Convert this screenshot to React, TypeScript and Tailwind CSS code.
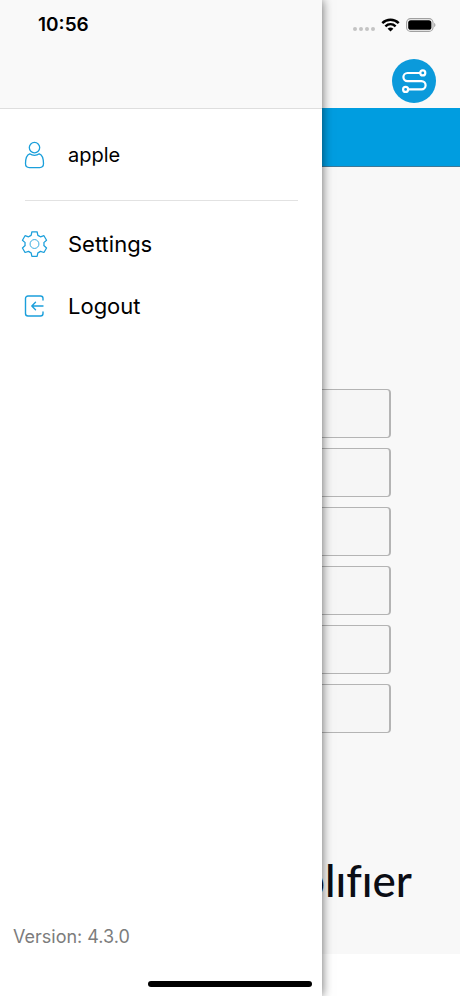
type IconProps = { className?: string };

function WifiIcon({ className }: IconProps) {
  return (
    <svg viewBox="0 0 20 15" className={className} fill="none" stroke="#000" strokeWidth="2.6" aria-hidden="true">
      <path d="M1.2 5.6C6.2.7 13.8.7 18.8 5.6" />
      <path d="M4.5 8.9c3.2-3 7.8-3 11 0" />
      <path d="M10 14.4 6.9 11.4c1.8-1.6 4.4-1.6 6.2 0z" fill="#000" stroke="none" />
    </svg>
  );
}

function BatteryIcon({ className }: IconProps) {
  return (
    <svg viewBox="0 0 30 14" className={className} fill="none" aria-hidden="true">
      <rect x="0.6" y="0.6" width="26.400" height="12.8" rx="4" stroke="#a0a0a0" strokeWidth="1.1" />
      <rect x="2.2" y="2.2" width="23.200" height="9.6" rx="2.6" fill="#000" />
      <path d="M28.200 4.8c1.7.7 1.7 3.7 0 4.4z" fill="#a0a0a0" />
    </svg>
  );
}

function BrandBadge({ className }: IconProps) {
  return (
    <svg viewBox="0 0 44 44" className={className} fill="none" aria-hidden="true">
      <circle cx="22" cy="22" r="22" fill="#0b9adb" />
      <g stroke="#fff" strokeWidth="2.2">
        <path d="M28 14H15.500a4 4 0 0 0 0 8.200H29.500a4.100 4.100 0 0 1 0 8.200H16.500" />
        <circle cx="30.8" cy="13.900" r="2.500" />
        <circle cx="13.600" cy="30.4" r="2.500" />
      </g>
    </svg>
  );
}

function UserIcon({ className }: IconProps) {
  return (
    <svg viewBox="0 0 26 28" className={className} fill="none" stroke="#1b9fdb" strokeWidth="1.3" aria-hidden="true">
      <circle cx="13" cy="6.600" r="5.2" />
      <path
        d="M8.2 12.8C5.4 13.8 4 18.4 4 22.6c0 3 1.4 4 3.8 4h10.4c2.4 0 3.8-1 3.8-4 0-4.200-1.400-8.800-4.200-9.800-1.300 1-2.900 1.600-4.800 1.600s-3.500-.6-4.800-1.600z"
        strokeLinejoin="round"
      />
    </svg>
  );
}

function GearIcon({ className }: IconProps) {
  return (
    <svg viewBox="0 0 28 28" className={className} fill="none" stroke="#1b9fdb" strokeWidth="1.3" aria-hidden="true">
      <circle cx="14" cy="14" r="4.600" strokeWidth="0.900" />
      <path
        d="M11.300 1.300h5.400l.8 3.700c1 .4 1.900.9 2.700 1.600l3.600-1.200 2.700 4.700-2.800 2.500c.2 1 .2 2 0 3l2.800 2.500-2.700 4.700-3.600-1.200c-.8.7-1.700 1.200-2.700 1.600l-.8 3.700h-5.400l-.8-3.700c-1-.4-1.900-.9-2.700-1.600l-3.600 1.200-2.700-4.700 2.800-2.500c-.2-1-.2-2 0-3L1.500 10.100l2.700-4.700 3.600 1.200c.8-.7 1.700-1.200 2.700-1.600z"
        strokeLinejoin="round"
      />
    </svg>
  );
}

function LogoutIcon({ className }: IconProps) {
  return (
    <svg
      viewBox="0 0 26 26"
      className={className}
      fill="none"
      stroke="#1b9fdb"
      strokeWidth="1.4"
      strokeLinecap="round"
      strokeLinejoin="round"
      aria-hidden="true"
    >
      <path d="M21.500 7V5.500a2.500 2.500 0 0 0-2.500-2.500H6.500A2.500 2.500 0 0 0 4 5.500v15A2.500 2.500 0 0 0 6.500 23H19a2.500 2.500 0 0 0 2.500-2.500V19" />
      <path d="M21.500 13H10.500M14 9.300 10.300 13l3.700 3.700" />
    </svg>
  );
}

const tiles = [1, 2, 3, 4, 5, 6];

function HomePage() {
  return (
    <div className="flex min-h-screen flex-col bg-white">
      <header className="flex h-[108px] flex-col items-end justify-between bg-[#f9f9f9] pt-[18px] pr-6 pb-[5px]">
        <div className="flex items-center gap-[6px]">
          <div className="flex gap-[2px] pt-2">
            {[0, 1, 2, 3].map((dot) => (
              <span key={dot} className="size-1 rounded-full bg-[#c4c4c4]" />
            ))}
          </div>
          <WifiIcon className="h-[14px] w-[19px]" />
          <BatteryIcon className="h-[14px] w-[30px]" />
        </div>
        <BrandBadge className="size-11" />
      </header>
      <div className="h-[59px] border-b border-[#3f7897] bg-[#009de0]" />
      <main className="flex flex-1 flex-col bg-[#f8f8f8] pt-[222px]">
        <div className="mx-auto flex w-[70%] flex-col gap-[10px]">
          {tiles.map((tile) => (
            <button
              key={tile}
              type="button"
              aria-label={`Tile ${tile}`}
              className="h-[49px] rounded border border-r-2 border-[#b4b4b4] bg-[#f6f6f6]"
            />
          ))}
        </div>
        <div className="mt-auto flex justify-end pr-12 pb-11 font-[Lato,sans-serif] text-[44px] leading-[60px] font-medium text-[#0b0d14] [font-variant-ligatures:none]">
          simplıfıer
        </div>
      </main>
      <div className="h-[42px]" />
    </div>
  );
}

function SideMenu() {
  return (
    <aside className="absolute inset-y-0 left-0 flex w-[70%] flex-col bg-white shadow-[0_0_10px_rgba(0,0,0,0.6)]">
      <div className="h-[109px] border-b border-[#dedede] bg-[#f9f9f9] pt-[13px] pl-[38px] text-[19px] leading-6 font-semibold">
        10:56
      </div>
      <nav className="flex flex-col">
        <a href="#profile" className="flex h-[91px] items-center gap-5 pl-[21px] text-[20px] leading-6">
          <UserIcon className="h-7 w-[27px]" />
          apple
        </a>
        <hr className="mr-6 ml-[25px] border-[#e2e2e2]" />
        <a href="#settings" className="mt-3 flex h-[62px] items-center gap-5 pl-[21px] text-[22px] leading-7">
          <GearIcon className="h-7 w-[27px]" />
          Settings
        </a>
        <a href="#logout" className="flex h-[62px] items-center gap-5 pl-[21px] text-[22px] leading-7">
          <LogoutIcon className="h-[26px] w-[27px]" />
          Logout
        </a>
      </nav>
      <p className="mt-auto pb-[47px] pl-[13px] text-[18px] leading-6 text-[#7c7c7c]">Version: 4.3.0</p>
    </aside>
  );
}

export default function App() {
  return (
    <div className="relative overflow-hidden font-[Inter,sans-serif] text-black">
      <HomePage />
      <SideMenu />
      <div className="absolute bottom-[9px] left-1/2 h-[6px] w-[164px] -translate-x-1/2 rounded-full bg-black" />
    </div>
  );
}
